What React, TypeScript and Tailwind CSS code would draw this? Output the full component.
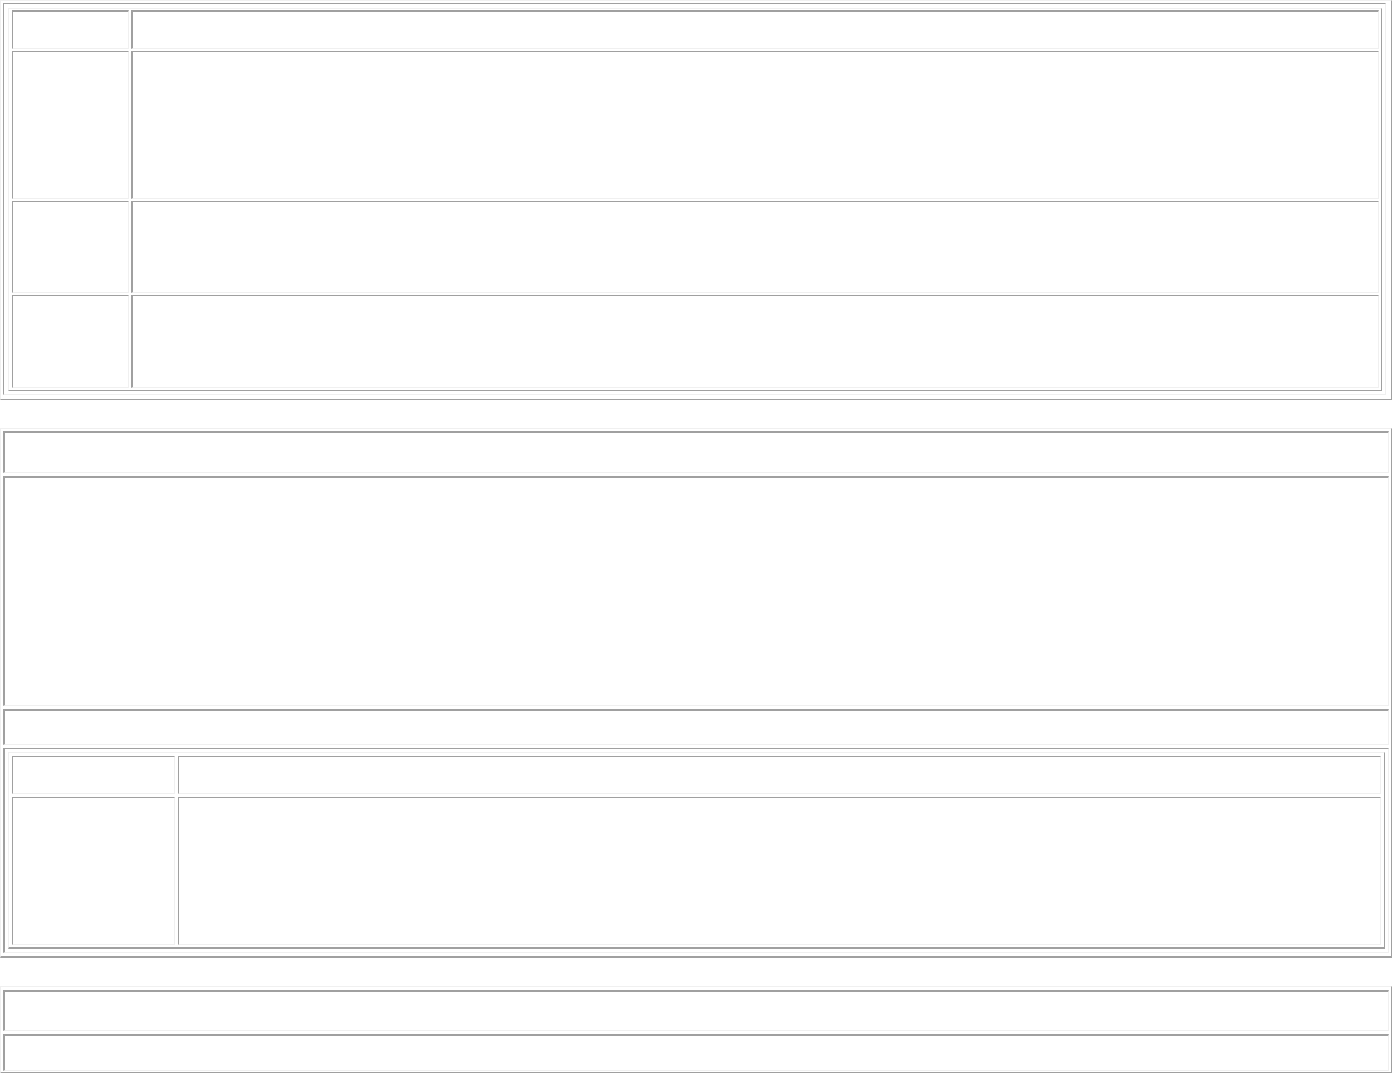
const outset =
  "border border-t-[#f0f0f0] border-l-[#f0f0f0] border-r-[#a0a0a0] border-b-[#a0a0a0]";
const inset =
  "border border-t-[#a0a0a0] border-l-[#a0a0a0] border-r-[#f0f0f0] border-b-[#f0f0f0]";

function Row({ height, top = "" }: { height: string; top?: string }) {
  return (
    <div className={`flex gap-[2px] ${height}`}>
      <div className={`${inset} ${top} w-[117px] shrink-0`}></div>
      <div className={`${inset} ${top} border-l-2 flex-1`}></div>
    </div>
  );
}

export default function App() {
  return (
    <div className="w-full bg-white font-['Liberation_Serif',serif]">
      {/* first table: one cell holding a 2 column grid */}
      <div className={`${outset} pl-[2px] pr-[5px] pt-[2px] pb-[4px]`}>
        <div className={`${inset} pl-[4px] pr-[3px] pt-[4px] pb-[3px]`}>
          <div className={`${outset} pl-[3px] pr-[2px] pt-[1px] pb-[2px] flex flex-col gap-[2px]`}>
            <Row height="h-[39px]" top="border-t-2" />
            <Row height="h-[148px]" />
            <Row height="h-[92px]" />
            <Row height="h-[93px]" />
          </div>
        </div>
      </div>

      {/* second table */}
      <div className={`${outset} border-b-2 mt-[28px] px-[2px] pt-[2px] pb-[3px] flex flex-col gap-[3px]`}>
        <div className={`${inset} border-t-2 border-l-2 h-[42px]`}></div>
        <div className={`${inset} border-t-2 border-l-2 h-[230px]`}></div>
        <div className={`${inset} border-t-2 border-l-2 h-[36px]`}></div>
        <div className={`${inset} border-l-2 px-[3px] py-[3px]`}>
          <div className={`${outset} border-b-2 p-[3px] pb-[2px] flex flex-col gap-[3px]`}>
            <div className="flex gap-[3px] h-[38px]">
              <div className={`${inset} w-[163px] shrink-0`}></div>
              <div className={`${inset} flex-1`}></div>
            </div>
            <div className="flex gap-[3px] h-[148px]">
              <div className={`${inset} w-[163px] shrink-0`}></div>
              <div className={`${inset} flex-1`}></div>
            </div>
          </div>
        </div>
      </div>

      {/* third table */}
      <div className={`${outset} border-b-2 mt-[28px] px-[2px] pt-[3px] pb-[1px] flex flex-col gap-[3px]`}>
        <div className={`${inset} border-t-2 border-l-2 h-[41px]`}></div>
        <div className={`${inset} border-t-2 border-l-2 h-[37px]`}></div>
      </div>
    </div>
  );
}
